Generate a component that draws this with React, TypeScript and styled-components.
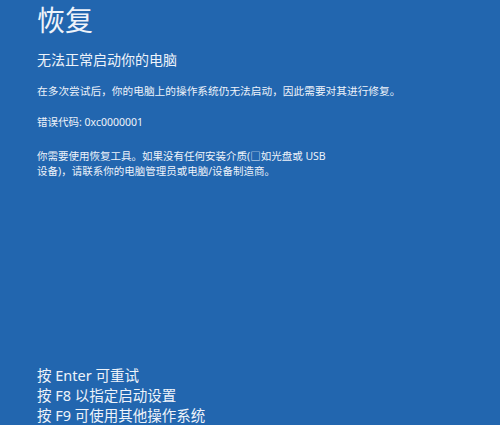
import React from 'react';
import styled, { createGlobalStyle } from 'styled-components';

const GlobalStyle = createGlobalStyle`
  html, body {
    margin: 0;
    padding: 0;
    background: #2266af;
  }
`;

const Screen = styled.div`
  width: 100%;
  min-height: 425px;
  height: 425px;
  box-sizing: border-box;
  background: #2266af;
  color: #eef3fa;
  font-family: 'Segoe UI', 'Noto Sans', 'Noto Sans CJK SC', sans-serif;
  display: flex;
  flex-direction: column;
  padding: 2px 0 0 37px;
  overflow: hidden;
  -webkit-font-smoothing: antialiased;
`;

const Title = styled.h1`
  margin: 0;
  font-size: 28px;
  font-weight: 400;
  line-height: 36px;
`;

const Subtitle = styled.h2`
  margin: 12px 0 0;
  font-size: 14px;
  font-weight: 400;
  line-height: 20px;
`;

const Text = styled.p<{ $gap: number; $size?: number }>`
  margin: ${(p) => p.$gap}px 0 0;
  font-size: ${(p) => p.$size ?? 10.5}px;
  line-height: 15px;
`;

const Footer = styled.div`
  margin-top: auto;
  display: flex;
  flex-direction: column;
`;

const Option = styled.div`
  font-size: 14.5px;
  line-height: 20px;
`;

const options = ['按 Enter 可重试', '按 F8 以指定启动设置', '按 F9 可使用其他操作系统'];

const App: React.FC = () => {
  return (
    <>
      <GlobalStyle />
      <Screen>
        <Title>恢复</Title>
        <Subtitle>无法正常启动你的电脑</Subtitle>
        <Text $gap={14} $size={10.7}>
          在多次尝试后，你的电脑上的操作系统仍无法启动，因此需要对其进行修复。
        </Text>
        <Text $gap={16}>错误代码: 0xc0000001</Text>
        <Text $gap={19}>
          你需要使用恢复工具。如果没有任何安装介质(□如光盘或 USB
          <br />
          设备)，请联系你的电脑管理员或电脑/设备制造商。
        </Text>
        <Footer>
          {options.map((o) => (
            <Option key={o}>{o}</Option>
          ))}
        </Footer>
      </Screen>
    </>
  );
};

export default App;
